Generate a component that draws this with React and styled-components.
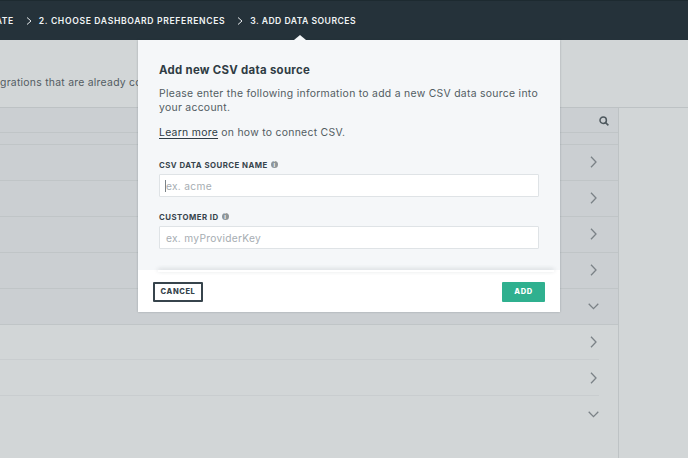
import React from "react";
import styled, { createGlobalStyle } from "styled-components";

const GlobalStyle = createGlobalStyle`
  html, body {
    margin: 0;
    padding: 0;
    background-color: #d2d6d7;
    font-family: "Inter", "Liberation Sans", sans-serif;
  }
`;

const Page = styled.div`
  position: relative;
  width: 688px;
  height: 458px;
  overflow: hidden;
  background-color: #d2d6d7;
`;

const TopBar = styled.div`
  display: flex;
  align-items: center;
  justify-content: flex-end;
  height: 40px;
  padding-right: 332px;
  box-sizing: border-box;
  background-color: #25323a;
  border-top: 1px solid #1d2a30;
  white-space: nowrap;
`;

const Step = styled.span`
  font-size: 8.6px;
  font-weight: 600;
  letter-spacing: ${(props) => props.$track || "0.58px"};
  color: #f1f4f5;
`;

const StepArrow = styled.svg`
  width: 6px;
  height: 8px;
  margin: 1px 7px 0 12px;
  flex: none;
`;

const Intro = styled.div`
  height: 68px;
  box-sizing: border-box;
  padding-top: 36px;
  border-bottom: 1px solid #bdc2c4;
  font-size: 10.4px;
  line-height: 14px;
  letter-spacing: 0.26px;
  color: #525c62;
  white-space: nowrap;
`;

const Table = styled.div`
  width: 619px;
  height: 350px;
  box-sizing: border-box;
  border-right: 1px solid #bec3c5;
`;

const TableHead = styled.div`
  display: flex;
  align-items: center;
  justify-content: flex-end;
  height: 25px;
  box-sizing: border-box;
  padding: 2px 9px 0 0;
  background-color: #cbcfd2;
  border-bottom: 1px solid #c0c5c7;
`;

const HeadGap = styled.div`
  height: 11px;
  background-color: #cbcfd2;
  border-bottom: 1px solid #c0c5c7;
`;

const Row = styled.div`
  display: flex;
  align-items: center;
  justify-content: flex-end;
  height: 36px;
  box-sizing: border-box;
  padding-right: ${(props) => (props.$open ? "19px" : "21px")};
  padding-bottom: ${(props) => (props.$open ? "0" : "2px")};
  background-color: ${(props) => (props.$dim ? "#cbcfd2" : "transparent")};
  border-bottom: 1px solid ${(props) => (props.$dim ? "#c0c5c7" : "transparent")};
  ${(props) =>
    props.$ruled &&
    `background-image: linear-gradient(#c9cdcf, #c9cdcf);
     background-repeat: no-repeat;
     background-size: 599px 1px;
     background-position: left bottom;`}
`;

const Arrow = styled.svg`
  display: block;
  fill: none;
  stroke: #7b8287;
  stroke-width: 1.3;
`;

const Modal = styled.div`
  position: absolute;
  top: 40px;
  left: 138px;
  width: 422px;
  height: 272px;
  display: flex;
  flex-direction: column;
  background-color: #f5f7f9;
  box-shadow: 0 0 2px rgba(37, 50, 58, 0.28);
  &::before {
    content: "";
    position: absolute;
    top: -5px;
    left: 156px;
    border-left: 6px solid transparent;
    border-right: 6px solid transparent;
    border-bottom: 5px solid #f5f7f9;
  }
`;

const ModalBody = styled.div`
  flex: 1;
  padding: 23px 21px 0;
  color: #525c62;
`;

const Title = styled.h2`
  margin: 0 0 9px;
  font-size: 11.4px;
  line-height: 15px;
  font-weight: 700;
  letter-spacing: 0.3px;
  color: #2f3c44;
`;

const Copy = styled.p`
  margin: 0 0 ${(props) => props.$gap || "11px"};
  font-size: 10.4px;
  line-height: 14px;
  letter-spacing: 0.29px;
`;

const LearnLink = styled.a`
  color: #2f3c44;
  text-decoration: underline;
  text-underline-offset: 2px;
`;

const Field = styled.div`
  margin-bottom: 14px;
`;

const LabelRow = styled.div`
  display: flex;
  align-items: center;
  gap: 3px;
  height: 11px;
  margin-bottom: 4px;
`;

const Label = styled.label`
  font-size: 7.8px;
  font-weight: 700;
  letter-spacing: 0.48px;
  color: #37444c;
`;

const InfoDot = styled.span`
  display: inline-flex;
  align-items: center;
  justify-content: center;
  width: 7px;
  height: 7px;
  margin-top: -1px;
  border-radius: 50%;
  background-color: #8d9599;
  color: #f5f7f9;
  font-size: 6px;
  font-weight: 700;
  line-height: 7px;
`;

const InputBox = styled.div`
  position: relative;
  display: flex;
  align-items: center;
  height: 23px;
  box-sizing: border-box;
  padding-left: 6px;
  background-color: #fff;
  border: 1px solid #dfe3e6;
  border-radius: 1px;
  font-size: 10.2px;
  letter-spacing: 0.3px;
  color: #a6adb2;
`;

const Caret = styled.span`
  position: absolute;
  left: 5px;
  top: 5px;
  width: 1px;
  height: 12px;
  background-color: #7b8287;
`;

const Footer = styled.div`
  position: relative;
  display: flex;
  align-items: center;
  justify-content: space-between;
  height: 42px;
  box-sizing: border-box;
  padding: 1px 15px 0;
  background-color: #fff;
  &::before {
    content: "";
    position: absolute;
    top: 0;
    left: 20px;
    right: 6px;
    height: 2px;
    box-shadow: 0 -1px 4px rgba(37, 50, 58, 0.22);
  }
`;

const CancelButton = styled.button`
  position: relative;
  width: 50px;
  height: 20px;
  padding: 0;
  background-color: #fff;
  border: 2px solid #37444c;
  border-radius: 1px;
  font-family: inherit;
  font-size: 7.5px;
  font-weight: 800;
  letter-spacing: 0.6px;
  color: #37444c;
`;

const AddButton = styled.button`
  position: relative;
  width: 43px;
  height: 20px;
  padding: 0;
  background-color: #2fb08f;
  border: 0;
  border-radius: 1px;
  font-family: inherit;
  font-size: 7.5px;
  font-weight: 800;
  letter-spacing: 0.6px;
  color: #fff;
`;

const ChevronRight = () => (
  <StepArrow viewBox="0 0 6 8" fill="none" stroke="#e6eaec" strokeWidth="1">
    <path d="M1 .5 5 4 1 7.5" />
  </StepArrow>
);

const rows = [
  { id: 1, dim: true },
  { id: 2, dim: true },
  { id: 3, dim: true },
  { id: 4, dim: true },
  { id: 5, dim: true, open: true },
  { id: 6, ruled: true },
  { id: 7, ruled: true },
  { id: 8, open: true },
];

const RowArrow = ({ open }) =>
  open ? (
    <Arrow width="11" height="7" viewBox="0 0 11 7">
      <path d="M.7.8 5.5 5.6 10.3.8" />
    </Arrow>
  ) : (
    <Arrow width="7" height="12" viewBox="0 0 7 12">
      <path d="M1 .7 6 6 1 11.3" />
    </Arrow>
  );

const App = () => (
  <Page>
    <GlobalStyle />
    <TopBar>
      <Step>1. INTEGRATE</Step>
      <ChevronRight />
      <Step $track="0.65px">2. CHOOSE DASHBOARD PREFERENCES</Step>
      <ChevronRight />
      <Step $track="0.47px">3. ADD DATA SOURCES</Step>
    </TopBar>
    <Intro>grations that are already connected to your account.</Intro>
    <Table>
      <TableHead>
        <svg width="10" height="10" viewBox="0 0 10 10" fill="none" stroke="#4e585e" strokeWidth="1.5">
          <circle cx="4.2" cy="4.2" r="3.2" />
          <path d="m6.6 6.6 2.8 2.8" />
        </svg>
      </TableHead>
      <HeadGap />
      {rows.map((row) => (
        <Row key={row.id} $dim={row.dim} $open={row.open} $ruled={row.ruled}>
          <RowArrow open={row.open} />
        </Row>
      ))}
    </Table>
    <Modal>
      <ModalBody>
        <Title>Add new CSV data source</Title>
        <Copy>
          Please enter the following information to add a new CSV data source into your account.
        </Copy>
        <Copy $gap="19px">
          <LearnLink>Learn more</LearnLink> on how to connect CSV.
        </Copy>
        <Field>
          <LabelRow>
            <Label>CSV DATA SOURCE NAME</Label>
            <InfoDot>i</InfoDot>
          </LabelRow>
          <InputBox>
            <Caret />
            ex. acme
          </InputBox>
        </Field>
        <Field>
          <LabelRow>
            <Label>CUSTOMER ID</Label>
            <InfoDot>i</InfoDot>
          </LabelRow>
          <InputBox>ex. myProviderKey</InputBox>
        </Field>
      </ModalBody>
      <Footer>
        <CancelButton>CANCEL</CancelButton>
        <AddButton>ADD</AddButton>
      </Footer>
    </Modal>
  </Page>
);

export default App;
